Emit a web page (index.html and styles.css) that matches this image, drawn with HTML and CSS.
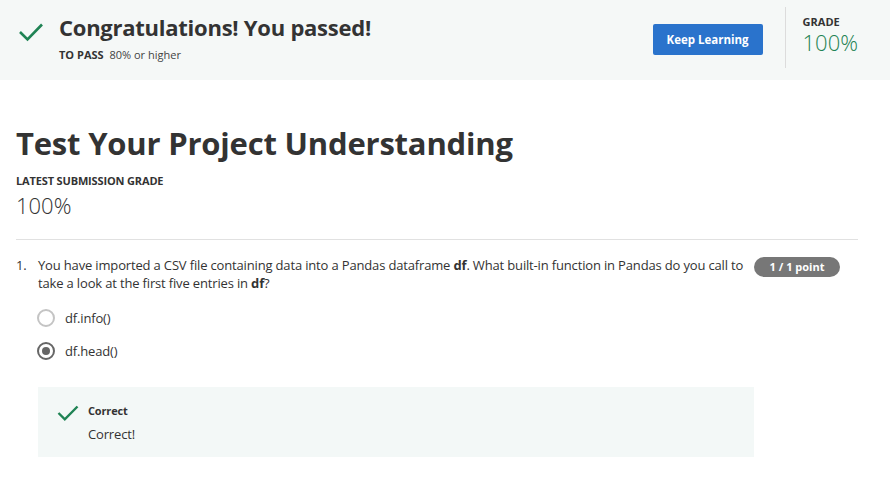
FILE: index.html
```html
<!DOCTYPE html>
<html>
<head>
<meta charset="utf-8">
<link rel="stylesheet" href="styles.css">
</head>
<body>
<header class="banner">
  <div class="banner-left">
    <svg class="banner-check" width="26" height="20" viewBox="0 0 26 20"><path d="M2 10 L9.5 17.5 L24 2.5" fill="none" stroke="#1f8354" stroke-width="2.6"/></svg>
    <div class="banner-text">
      <h1 class="banner-title">Congratulations! You passed!</h1>
      <div class="banner-sub"><span class="label">TO PASS</span> 80% or higher</div>
    </div>
  </div>
  <div class="banner-right">
    <button class="btn">Keep Learning</button>
    <div class="divider"></div>
    <div class="grade">
      <div class="label">GRADE</div>
      <div class="grade-val">100%</div>
    </div>
  </div>
</header>
<main class="main">
  <h2 class="page-title">Test Your Project Understanding</h2>
  <div class="label sub-label">LATEST SUBMISSION GRADE</div>
  <div class="big-grade">100%</div>
  <hr class="rule">
  <div class="question">
    <div class="q-num">1.</div>
    <div class="q-body">
      <div class="q-head">
        <p class="q-text">You have imported a CSV file containing data into a Pandas dataframe <b>df</b>. What built-in function in Pandas do you call to take a look at the first five entries in <b>df</b>?</p>
        <span class="badge">1 / 1 point</span>
      </div>
      <div class="options">
        <div class="option"><span class="radio"></span><span>df.info()</span></div>
        <div class="option"><span class="radio checked"></span><span>df.head()</span></div>
      </div>
      <div class="feedback">
        <svg class="fb-check" width="22" height="18" viewBox="0 0 22 18"><path d="M1.5 9 L7.8 15.3 L20.5 2.5" fill="none" stroke="#1f8354" stroke-width="2.4"/></svg>
        <div>
          <div class="fb-title">Correct</div>
          <div class="fb-text">Correct!</div>
        </div>
      </div>
    </div>
  </div>
</main>
</body>
</html>
```
FILE: styles.css
```css
* { box-sizing: border-box; }
body {
  margin: 0;
  font-family: "Open Sans", "Liberation Sans", sans-serif;
  color: #333;
  background: #fff;
}
.banner {
  height: 80px;
  background: #f5f8f7;
  display: flex;
  justify-content: space-between;
  align-items: stretch;
  padding-left: 18px;
}
.banner-left {
  display: flex;
  align-items: flex-start;
  padding-top: 12px;
}
.banner-check { margin-top: 10px; margin-right: 15px; }
.banner-title {
  margin: 0;
  font-size: 22px;
  letter-spacing: -0.25px;
  line-height: 30px;
  font-weight: 700;
  color: #333;
}
.banner-sub {
  font-size: 11px;
  line-height: 16px;
  margin-top: 5px;
  color: #444;
}
.label {
  font-size: 11px;
  font-weight: 700;
  color: #333;
}
.banner-sub .label { margin-right: 3px; }
.banner-right {
  display: flex;
  align-items: center;
}
.btn {
  width: 110px;
  height: 31px;
  background: #2a73cc;
  color: #fff;
  border: none;
  border-radius: 2px;
  font-family: inherit;
  font-size: 11.5px;
  font-weight: 700;
  padding: 0;
  margin-top: -1px;
}
.divider {
  width: 1px;
  align-self: stretch;
  margin: 7px 0 12px 22px;
  background: #dcdcdc;
}
.grade {
  padding: 0 32px 0 17px;
  align-self: flex-start;
  padding-top: 14px;
}
.grade .label { line-height: 16px; }
.grade-val {
  font-size: 22px;
  font-weight: 300;
  color: #1f8354;
  line-height: 24px;
}
.main {
  padding: 0 32px 0 16px;
}
.page-title {
  margin: 0;
  padding-top: 41px;
  font-size: 31px;
  letter-spacing: -0.2px;
  line-height: 44px;
  font-weight: 700;
  color: #333;
}
.sub-label {
  margin-top: 8px;
  line-height: 16px;
  letter-spacing: -0.15px;
}
.big-grade {
  font-size: 22px;
  font-weight: 300;
  line-height: 30px;
  margin-top: 1px;
  color: #333;
}
.rule {
  border: none;
  border-top: 1px solid #e1e1e1;
  margin: 19px 0 0 0;
}
.question {
  display: flex;
  padding-top: 16px;
  font-size: 13px;
  line-height: 18px;
  letter-spacing: -0.16px;
}
.q-num { width: 22px; }
.q-body { flex: 1; }
.q-head {
  display: flex;
  align-items: flex-start;
  justify-content: space-between;
}
.q-text {
  margin: 0;
  width: 712px;
  color: #333;
}
.badge {
  margin-top: 1px;
  margin-right: 18px;
  width: 86px;
  height: 20px;
  border-radius: 10px;
  background: #777;
  color: #fff;
  font-size: 11px;
  font-weight: 700;
  line-height: 20px;
  text-align: center;
  letter-spacing: 0;
}
.options {
  display: flex;
  flex-direction: column;
  gap: 15px;
  margin-top: 17px;
}
.option {
  display: flex;
  align-items: center;
  gap: 10px;
  height: 18px;
  color: #333;
}
.radio {
  width: 18px;
  height: 18px;
  border-radius: 50%;
  border: 2px solid #c4c4c4;
  margin-left: -1px;
  display: flex;
  align-items: center;
  justify-content: center;
}
.radio.checked { border-color: #666; }
.radio.checked::after {
  content: "";
  width: 8px;
  height: 8px;
  border-radius: 50%;
  background: #666;
}
.feedback {
  margin-top: 27px;
  width: 716px;
  height: 70px;
  background: #f3f8f7;
  display: flex;
  align-items: flex-start;
  padding: 16px 0 0 19px;
  gap: 9px;
}
.fb-check { margin-top: 1px; }
.fb-title {
  font-size: 11px;
  font-weight: 700;
  line-height: 16px;
  color: #333;
}
.fb-text {
  font-size: 13px;
  line-height: 18px;
  margin-top: 6px;
}
```
